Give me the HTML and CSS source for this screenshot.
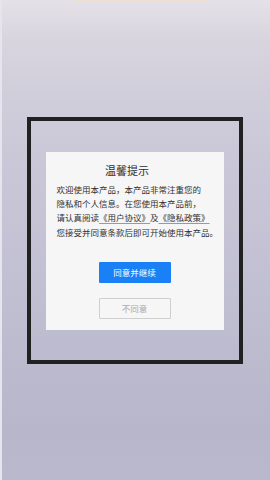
FILE: index.html
```html
<!DOCTYPE html>
<html>
<head>
    <title>温馨提示</title>
    <meta name="viewport" content="width=device-width, initial-scale=1"/>
    <link rel="stylesheet" href="styles.css">
</head>
<body>
<div class="screen">
    <div class="glow"></div>
    <div class="frame">
        <div class="dialog">
            <h2 class="title">温馨提示</h2>
            <p class="notice">
                欢迎使用本产品，本产品非常注重您的<br>
                隐私和个人信息。在您使用本产品前，<br>
                请认真阅读<a class="link">《用户协议》</a>及<a class="link">《隐私政策》</a><br>
                您接受并同意条款后即可开始使用本产品。
            </p>
            <button type="button" class="btn btn-agree">同意并继续</button>
            <button type="button" class="btn btn-refuse">不同意</button>
        </div>
    </div>
</div>
</body>
</html>
```

FILE: styles.css
```css
body {
    margin: 0;
    font-family: "Noto Sans CJK SC", "Noto Sans", sans-serif;
}

.screen {
    width: 270px;
    height: 480px;
    box-sizing: border-box;
    border-left: 2px solid #e6e4ec;
    background: linear-gradient(
            to bottom,
            #e4e1e8 0%,
            #d8d5df 8%,
            #cbc8d8 30%,
            #c1bfd2 60%,
            #b7b6ca 90%,
            #b9b8cc 100%
    );
    overflow: hidden;
}

.glow {
    height: 2px;
    margin: 0 63px 0 73px;
    background: #eee0cc;
}

.frame {
    width: 216px;
    height: 247px;
    margin: 115px 0 0 25px;
    box-sizing: border-box;
    border: 4px solid #1f2221;
    display: flex;
    align-items: center;
    justify-content: center;
}

.dialog {
    width: 178px;
    height: 178px;
    box-sizing: border-box;
    margin-left: -1px;
    padding: 11px 4px 11px 11px;
    background: #f6f6f6;
    display: flex;
    flex-direction: column;
    align-items: center;
}

.title {
    align-self: stretch;
    margin: 0;
    padding-right: 22px;
    text-align: center;
    font-size: 11px;
    line-height: 14px;
    font-weight: normal;
    color: #2e2e2e;
}

.notice {
    align-self: stretch;
    margin: 5px 0 0;
    font-size: 8.5px;
    line-height: 14.4px;
    color: #303030;
    white-space: nowrap;
}

.link {
    color: #303030;
    text-decoration: underline;
    text-decoration-color: #9a9a9a;
    text-underline-offset: 2px;
}

.btn {
    width: 72px;
    height: 21px;
    padding: 0;
    margin-left: -7px;
    font-family: inherit;
    font-size: 8.5px;
    border-radius: 1px;
    cursor: pointer;
}

.btn-agree {
    margin-top: 23px;
    border: none;
    background: #1a80f6;
    color: #ffffff;
}

.btn-refuse {
    margin-top: 15px;
    border: 1px solid #cfcfcf;
    background: #f6f6f6;
    color: #aaaaaa;
}
```
